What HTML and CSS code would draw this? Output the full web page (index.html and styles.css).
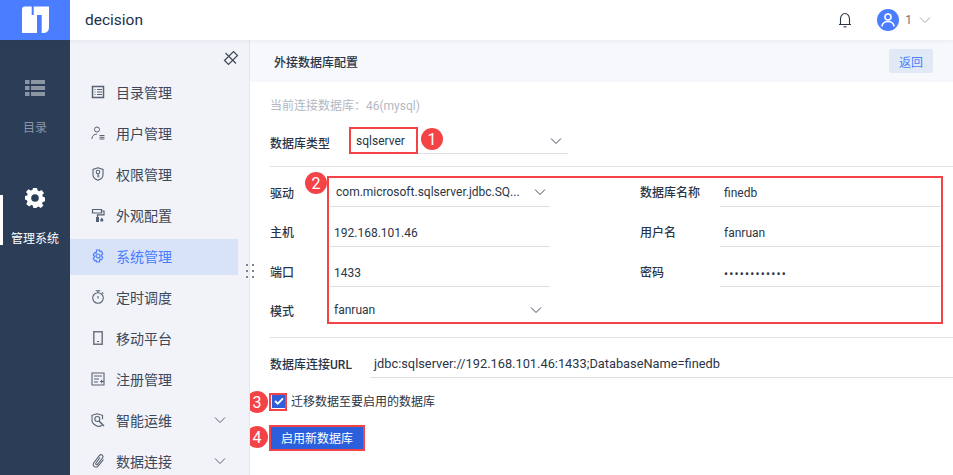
FILE: index.html
```html
<!DOCTYPE html>
<html lang="zh">
<head>
<meta charset="utf-8">
<title>decision</title>
<link rel="stylesheet" href="styles.css">
</head>
<body>
<header class="topbar">
  <div class="logo">
    <svg width="28" height="28" viewBox="0 0 28 28"><path fill="#fff" d="M1 3.500 Q1 .5 4 .5 H10.700 V9 H16 V27 H1 Z M12.700 .5 H28 V21 Q28 27 22 27 H20.700 V9 H12.700 Z"/></svg>
  </div>
  <div class="app-name">decision</div>
  <div class="top-actions">
    <svg class="bell" width="16" height="16" viewBox="0 0 16 16" fill="none" stroke="#2a3547" stroke-width="1.100"><path d="M2 12.500 H14 M3.500 12.500 V7 a4.500 5.500 0 0 1 9 0 V12.500"/><path d="M6.500 14.800 H9.500"/></svg>
    <svg class="avatar" width="22" height="22" viewBox="0 0 22 22"><circle cx="11" cy="11" r="11" fill="#4a7dff"/><circle cx="11" cy="8" r="3" fill="none" stroke="#fff" stroke-width="1.600"/><path d="M4.800 17.500 C5.500 13.500 8 12.500 11 12.500 C14 12.500 16.500 13.500 17.200 17.500" fill="none" stroke="#fff" stroke-width="1.600"/></svg>
    <span class="user">1</span>
    <svg width="12" height="8" viewBox="0 0 12 8" fill="none" stroke="#a4a9b2" stroke-width="1"><path d="M1 1.500 L6 6.500 L11 1.500"/></svg>
  </div>
</header>
<div class="shell">
  <nav class="rail">
    <div class="rail-item rail-catalog">
      <svg width="20" height="16" viewBox="0 0 20 16" fill="#8c95a3"><path d="M0 0h4.500v4H0zM6 0h14v4H6zM0 6h4.500v4H0zM6 6h14v4H6zM0 12h4.500v4H0zM6 12h14v4H6z"/></svg>
      <span>目录</span>
    </div>
    <div class="rail-item rail-active">
      <svg width="20" height="20" viewBox="0 0 20 20"><path fill="#fff" fill-rule="evenodd" d="M8 0h4l.6 2.600 1.700.7L16.600 2 19 5l-1.700 2 .6 1.800 2.100.6v3.800l-2.300.7-.6 1.600 1.300 2.200-2.800 2.300-2-1.500-1.700.7L11.600 20H8.400l-.6-2.400-1.700-.7-2 1.500L1.200 16l1.300-2.200-.6-1.600L0 11.600V8l2.100-.6L2.700 6 1 4l2.400-2.700 2.300 1.300 1.700-.7zM10 6.200a3.800 3.800 0 1 0 0 7.600 3.800 3.800 0 0 0 0-7.600z"/></svg>
      <span>管理系统</span>
    </div>
  </nav>
  <aside class="sidebar">
    <div class="pin-row">
      <svg width="16" height="16" viewBox="0 0 16 16" fill="none" stroke="#3d4859" stroke-width="1.200"><path d="M1.500 10.500 L10.500 1.500 L14.500 5.500 L5.500 14.500 Z M2.500 3 L13 13.500"/></svg>
    </div>
    <ul class="menu">
      <li class="menu-item"><svg class="mi" viewBox="0 0 14 14" fill="none" stroke="#566273"><path stroke-width="1.500" d="M1.500 1.500h11v11h-11z"/><path d="M3.500 4.500h1M6 4.500h5M3.500 7h1M6 7h5M3.500 9.500h1M6 9.500h5"/></svg><span>目录管理</span></li>
      <li class="menu-item"><svg class="mi" viewBox="0 0 14 14" fill="none" stroke="#566273"><circle cx="6" cy="3.500" r="2.500"/><path d="M.8 13c.4-3.500 2.500-5 5.200-5M8.500 9.500h5M8.500 11.300h5M8.500 13h5"/></svg><span>用户管理</span></li>
      <li class="menu-item"><svg class="mi" viewBox="0 0 14 14" fill="none" stroke="#566273" stroke-width="1.100"><path d="M7 .8l5 1.700v5.500c0 2.500-2.500 4.300-5 5.300-2.500-1-5-2.800-5-5.300V2.500z"/><circle cx="7" cy="5" r="1.800"/><path d="M7 6.800V10.500M7 9h1.500"/></svg><span>权限管理</span></li>
      <li class="menu-item"><svg class="mi" viewBox="0 0 14 14" fill="none" stroke="#566273"><path stroke-width="1.200" d="M1.500 1.500h9v3.500h-9zM10.500 3h2.500v3.800H6.500V9"/><path fill="#566273" stroke="none" d="M5 9h3v5H5zM10.800 9.500l1.400 2a1.500 1.500 0 1 1-2.800 0z"/></svg><span>外观配置</span></li>
      <li class="menu-item menu-active"><svg class="mi" viewBox="0 0 14 14" fill="none" stroke="#4a7dff" stroke-width="1.200"><path d="M5.600 1h2.800l.5 1.500 1.400-.4 1.400 2.400-1 1.300v1.400l1 1.300-1.400 2.400-1.400-.4L8.400 13H5.600l-.5-1.500-1.400.4-1.400-2.400 1-1.300V7.300l-1-1.300 1.400-2.400 1.400.4z"/><circle cx="7" cy="7" r="2"/></svg><span>系统管理</span></li>
      <li class="menu-item"><svg class="mi" viewBox="0 0 14 14" fill="none" stroke="#566273" stroke-width="1.100"><circle cx="7" cy="8" r="5.300"/><path d="M7 6v2.500M4.800 .8h4.400M7 .8v1.900M11 2.300l1.300 1.300"/></svg><span>定时调度</span></li>
      <li class="menu-item"><svg class="mi" viewBox="0 0 14 14" fill="none" stroke="#6d7785" stroke-width="1.500"><path d="M2.800 .8h8.400v12.400H2.800z"/><path stroke-width="1" stroke="#566273" d="M6 10.500h2"/></svg><span>移动平台</span></li>
      <li class="menu-item"><svg class="mi" viewBox="0 0 14 14" fill="none" stroke="#566273" stroke-width="1.100"><path d="M1 1h12v12H1zM3 4h8M3 7h5M3 10h4M9 9.500h3.500M10.700 7.800v3.500"/></svg><span>注册管理</span></li>
      <li class="menu-item"><svg class="mi" viewBox="0 0 14 14" fill="none" stroke="#566273" stroke-width="1.100"><path d="M6 .8l5.500 1.500v4M11 12.500C9 13.500 8 13.500 6.500 13.300 3.500 12 1 10 1 7.500V2.300L6 .8"/><circle cx="6.300" cy="6" r="2.500"/><path stroke-width="1.500" d="M8 8l5 5"/></svg><span>智能运维</span><svg class="caret" viewBox="0 0 12 8" fill="none" stroke="#566273"><path d="M1 1.500 L6 6.500 L11 1.500"/></svg></li>
      <li class="menu-item"><svg class="mi" viewBox="0 0 14 14" fill="none" stroke="#566273" stroke-width="1.100"><path d="M9 3.500L5 9c-.8 1.300.8 2.300 1.700 1.200L11.500 4c1.800-2.300-1.300-4.600-3.200-2.300L3 8.500c-2.600 3.500 2 6.500 4.500 3.200L12.500 5.500"/></svg><span>数据连接</span><svg class="caret" viewBox="0 0 12 8" fill="none" stroke="#566273"><path d="M1 1.500 L6 6.500 L11 1.500"/></svg></li>
    </ul>
    <div class="grip"><i></i><i></i><i></i><i></i><i></i><i></i></div>
  </aside>
  <main class="main">
    <div class="subhead">
      <h1>外接数据库配置</h1>
      <button class="back">返回</button>
    </div>
    <section class="content">
      <p class="current">当前连接数据库：46(mysql)</p>
      <div class="type-row">
        <label class="lab">数据库类型</label>
        <div class="type-select"><span>sqlserver</span><svg class="arrow" viewBox="0 0 12 8" fill="none" stroke="#3d4859"><path d="M1 1.500 L6 6.500 L11 1.500"/></svg></div>
      </div>
      <div class="form-grid">
        <label class="lab low">驱动</label>
        <div class="field drv"><span>com.microsoft.sqlserver.jdbc.SQ...</span><svg class="arrow" viewBox="0 0 12 8" fill="none" stroke="#3d4859"><path d="M1 1.500 L6 6.500 L11 1.500"/></svg></div>
        <label class="lab">数据库名称</label>
        <div class="field">finedb</div>
        <label class="lab">主机</label>
        <div class="field">192.168.101.46</div>
        <label class="lab">用户名</label>
        <div class="field">fanruan</div>
        <label class="lab">端口</label>
        <div class="field">1433</div>
        <label class="lab">密码</label>
        <div class="field pass">••••••••••••</div>
        <label class="lab low">模式</label>
        <div class="field drv mode"><span>fanruan</span><svg class="arrow" viewBox="0 0 12 8" fill="none" stroke="#3d4859"><path d="M1 1.500 L6 6.500 L11 1.500"/></svg></div>
      </div>
      <div class="url-row">
        <label class="lab">数据库连接URL</label>
        <div class="url">jdbc:sqlserver://192.168.101.46:1433;DatabaseName=finedb</div>
      </div>
      <div class="check-row">
        <span class="check"><svg width="10" height="8" viewBox="0 0 10 8" fill="none" stroke="#fff" stroke-width="1.800"><path d="M1 4 L3.800 6.700 L9 1.300"/></svg></span>
        <span class="check-label">迁移数据至要启用的数据库</span>
      </div>
      <button class="enable">启用新数据库</button>
    </section>
    <div class="mark box1"></div>
    <div class="mark box2"></div>
    <div class="mark box3"></div>
    <div class="mark box4"></div>
    <div class="num n1">1</div>
    <div class="num n2">2</div>
    <div class="num n3">3</div>
    <div class="num n4">4</div>
  </main>
</div>
</body>
</html>
```
FILE: styles.css
```css
* { box-sizing: border-box; }
html, body { margin: 0; height: 100%; }
body {
  width: 953px; height: 475px; overflow: hidden; background: #fff;
  font-family: Roboto, "Noto Sans CJK SC", sans-serif; font-size: 12px; color: #2a3547;
  display: flex; flex-direction: column;
}
.topbar { height: 40px; flex: none; display: flex; align-items: center; background: #fff; position: relative; z-index: 2; box-shadow: 0 1px 4px rgba(40, 60, 90, .08); }
.logo { width: 70px; height: 40px; background: #4a7dff; display: flex; align-items: center; justify-content: center; }
.app-name { margin-left: 15px; font-size: 15.500px; color: #22304a; }
.top-actions { margin-left: auto; display: flex; align-items: center; padding-right: 22px; }
.bell { margin-right: 24px; }
.avatar { margin-right: 6px; }
.user { margin-right: 7px; font-size: 12px; color: #6b7380; }
.shell { flex: 1; display: flex; min-height: 0; }
.rail { width: 70px; flex: none; background: #2c3d58; display: flex; flex-direction: column; }
.rail-item { display: flex; flex-direction: column; align-items: center; font-size: 12px; position: relative; }
.rail-catalog { margin-top: 40px; height: 76px; gap: 22px; color: #8c95a3; }
.rail-active { margin-top: 31px; color: #fff; gap: 21px; height: 68px; padding-top: 1px; }
.rail-active::before { content: ""; position: absolute; left: 0; top: 8px; width: 3px; height: 50px; background: #fff; }
.sidebar { width: 180px; flex: none; background: #f1f3f8; border-right: 1px solid #e3e6ed; position: relative; z-index: 1; }
.pin-row { height: 31px; display: flex; justify-content: flex-end; padding: 10px 10px 0 0; }
.menu { list-style: none; margin: 0; padding: 0; }
.menu-item { height: 41px; padding-left: 21px; display: flex; align-items: center; font-size: 14px; color: #3c4759; position: relative; width: 168px; }
.menu-item span { margin-left: 11px; position: relative; }
.menu-active { color: #4a7dff; }
.menu-active::before { content: ""; position: absolute; left: 0; right: 0; top: 4px; height: 36px; background: #d8e3f7; }
.menu-active .mi { position: relative; }
.mi { width: 14px; height: 14px; flex: none; }
.caret { width: 12px; height: 8px; margin-left: auto; margin-right: 12px; }
.grip { position: absolute; left: 176px; top: 224px; display: grid; grid-template-columns: 2px 2px; gap: 4px; }
.grip i { width: 2px; height: 2px; background: #7a8494; }
.main { flex: 1; position: relative; min-width: 0; }
.subhead { height: 42px; background: #f7f8fb; display: flex; align-items: center; padding: 0 20px 0 24px; }
.subhead h1 { margin: 0; font-size: 12px; font-weight: 500; color: #2a3547; }
.back { margin-left: auto; width: 44px; height: 24px; border: 0; border-radius: 2px; background: #e2e9f6; color: #4a7dff; font: 12px Roboto, "Noto Sans CJK SC", sans-serif; padding: 0; }
.content { padding-left: 20px; }
.current { margin: 15px 0 0; height: 18px; line-height: 18px; color: #b3b8c1; font-size: 12px; }
.lab { font-weight: 500; font-size: 12px; color: #2a3547; }
.type-row { height: 50px; margin-top: 2px; padding-top: 10px; display: flex; align-items: flex-start; border-bottom: 1px solid #e1e3e8; }
.type-row .lab { width: 80px; margin-top: 7px; }
.type-select { width: 218px; height: 27px; border-bottom: 1px solid #dcdfe6; display: flex; align-items: center; justify-content: space-between; padding: 2px 6px 0; font-size: 12px; }
.arrow { width: 12px; height: 8px; flex: none; }
.form-grid { display: grid; grid-template-columns: 60px 220px 90px 80px 220px; grid-template-rows: 40px 40px 40px 37px; align-items: center; height: 171px; border-bottom: 1px solid #e1e3e8; padding-bottom: 14px; }
.form-grid .lab { padding-top: 8px; }
.form-grid .lab.low { padding-top: 10px; }
.form-grid .lab:nth-child(4n+3) { grid-column: 4; }
.field { height: 100%; border-bottom: 1px solid #dcdfe6; display: flex; align-items: center; padding: 12px 0 0 4px; font-size: 12px; }
.field.drv { justify-content: space-between; padding: 10px 4px 0 6px; }
.field.mode { padding: 9px 5px 0 4px; width: 217px; }
.pass { letter-spacing: 1.200px; padding-top: 14px; }
.url-row { height: 40px; display: flex; align-items: flex-end; }
.url-row .lab { width: 100px; flex: none; padding-bottom: 6px; }
.url { flex: 1; height: 28px; border-bottom: 1px solid #dcdfe6; display: flex; align-items: center; padding-left: 4px; font-size: 12.800px; }
.check-row { display: flex; align-items: center; gap: 6px; height: 18px; margin-top: 14px; margin-left: 2px; }
.check { width: 13px; height: 14px; background: #2f5fd8; display: flex; align-items: center; justify-content: center; }
.check-label { padding-bottom: 2px; }
.enable { display: block; margin: 17px 0 0 1px; width: 92px; height: 22px; border: 0; padding: 0 0 2px; background: #2b5fdc; color: #fff; font: 12px Roboto, "Noto Sans CJK SC", sans-serif; }
.mark { position: absolute; border: 2px solid #f44347; pointer-events: none; }
.box1 { left: 99px; top: 87px; width: 69px; height: 27px; }
.box2 { left: 77px; top: 136px; width: 616px; height: 148px; }
.box3 { left: 19px; top: 353px; width: 18px; height: 18px; }
.box4 { left: 19px; top: 385px; width: 96px; height: 26px; }
.num { position: absolute; width: 22px; height: 22px; border-radius: 50%; background: #f44347; color: #fff; font-size: 16px; display: flex; align-items: center; justify-content: center; }
.n1 { left: 171px; top: 88px; }
.n2 { left: 55px; top: 132px; }
.n3 { left: -4px; top: 351px; }
.n4 { left: -4px; top: 386px; }
```
